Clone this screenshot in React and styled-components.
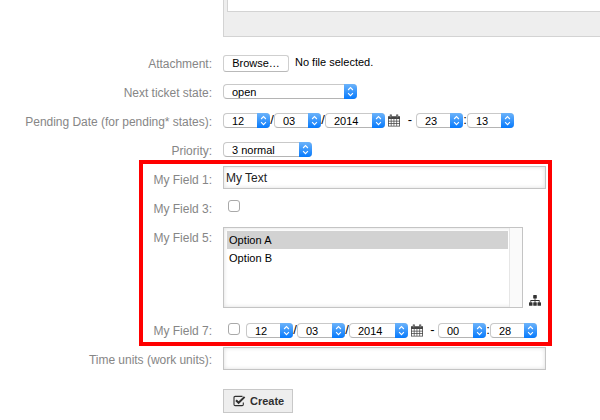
import React from 'react';
import styled, { createGlobalStyle } from 'styled-components';

const GlobalStyle = createGlobalStyle`
  * { box-sizing: border-box; }
  body {
    margin: 0;
    background: #fff;
    font-family: 'Liberation Sans', Arial, Helvetica, sans-serif;
    font-size: 11px;
    color: #000;
    overflow: hidden;
  }
`;

const Page = styled.main`
  position: relative;
  width: 600px;
  height: 420px;
  overflow: hidden;
`;

const EditorFrame = styled.div`
  height: 37px;
  margin-left: 223px;
  padding: 0 0 24px 3px;
  background: #eee;
  border-left: 1px solid #d3d3d3;
  border-bottom: 1px solid #d3d3d3;
`;

const EditorBody = styled.div`
  height: 12px;
  background: #fff;
  border-left: 1px solid #d3d3d3;
  border-bottom: 1px solid #d3d3d3;
`;

const Form = styled.form`
  display: flex;
  flex-direction: column;
  padding-top: 12px;
`;

const Row = styled.div`
  display: grid;
  grid-template-columns: 212px 1fr;
  column-gap: 11px;
  height: ${(p) => p.$height || 29}px;
`;

const Label = styled.label`
  padding-top: 1px;
  text-align: right;
  white-space: nowrap;
  line-height: 29px;
  font-size: 12px;
  letter-spacing: -0.02px;
  color: #868686;
`;

const Controls = styled.div`
  display: flex;
  align-items: flex-start;
  padding-top: ${(p) => p.$top || 0}px;
`;

const BrowseButton = styled.button`
  width: 66px;
  height: 17px;
  margin: 0 6px 0 0;
  padding: 0;
  border: 1px solid #cfcfcf;
  border-bottom-color: #b9b9b9;
  border-radius: 3px;
  background: #fff;
  font: 11px/13px 'Liberation Sans', Arial, sans-serif;
  color: #000;
`;

const FileStatus = styled.span`
  line-height: 15px;
`;

const SelectBox = styled.div`
  display: flex;
  justify-content: space-between;
  flex: none;
  width: ${(p) => p.$width}px;
  height: 15px;
  padding-left: 8px;
  border: 1px solid #c9c9c9;
  border-right: 0;
  border-bottom-color: #b4b4b4;
  border-radius: 4px;
  background: #fff;
  line-height: 14px;
`;

const Stepper = styled.span`
  display: flex;
  align-items: center;
  justify-content: center;
  width: 13px;
  height: 15px;
  margin: -1px 0;
  border-radius: 0 4px 4px 0;
  background: linear-gradient(#6cb3fa, #067afd);
`;

const Separator = styled.span`
  flex: none;
  width: ${(p) => p.$width || 4}px;
  padding-left: ${(p) => p.$inset || 0}px;
  text-align: center;
  line-height: 14px;
  font-size: 13px;
`;

const CalendarSlot = styled.span`
  display: flex;
  width: 12px;
  margin: ${(p) => p.$top}px 0 0 3px;
`;

const TextInput = styled.input`
  width: 323px;
  height: 23px;
  padding: 0 3px 0 2px;
  border: 1px solid #c4c4c4;
  border-radius: 0;
  outline: 0;
  background: #fff;
  box-shadow: inset 0 0 4px #ddd;
  font: 12px 'Liberation Sans', Arial, sans-serif;
  color: #222;
`;

const Checkbox = styled.span`
  flex: none;
  width: 12px;
  height: 12px;
  margin: 0 6px 0 5px;
  border: 1px solid #a9a9a9;
  border-radius: 3px;
  background: #fff;
`;

const ListBox = styled.div`
  display: flex;
  width: 300px;
  height: 81px;
  border: 1px solid #c4c4c4;
  background: #fff;
  box-shadow: inset 0 0 4px #ddd;
`;

const Options = styled.div`
  flex: 1;
  padding: 3px 1px 0 3px;
`;

const Option = styled.div`
  height: 18px;
  padding-left: 2px;
  line-height: 19px;
  letter-spacing: 0.05px;
  background: ${(p) => (p.$selected ? '#d2d2d2' : 'transparent')};
`;

const ScrollTrack = styled.div`
  width: 13px;
  border-left: 1px solid #e6e6e6;
  background: #fafafa;
`;

const TreeSlot = styled.span`
  display: flex;
  align-self: flex-end;
  margin: 0 0 10px 6px;
`;

const SubmitButton = styled.button`
  display: flex;
  align-items: center;
  gap: 4px;
  width: 70px;
  height: 24px;
  margin: 15px 0 0 223px;
  padding: 0 0 0 9px;
  border: 1px solid #c8c8c8;
  background: #eee;
  font: bold 11px 'Liberation Sans', Arial, sans-serif;
  color: #303030;
`;

const Highlight = styled.div`
  position: absolute;
  left: 139px;
  top: 160px;
  width: 413px;
  height: 186px;
  border: 4px solid #f00;
  pointer-events: none;
`;

function Select({ width, children }) {
  return (
    <SelectBox $width={width}>
      {children}
      <Stepper>
        <svg width="7" height="11" viewBox="0 0 7 11" fill="none" stroke="#fff" strokeWidth="1.1">
          <path d="M1.1 4 3.5 1.6 5.9 4M1.1 7.2 3.5 9.6 5.9 7.2" />
        </svg>
      </Stepper>
    </SelectBox>
  );
}

function CalendarIcon() {
  return (
    <svg width="12" height="13" viewBox="0 0 12 13">
      <path fill="#444" d="M0 2.2h1.8V.5h2v1.7h4.4V.5h2v1.7H12V12.6H0z" />
      <path
        fill="#fff"
        d="M.8 4.9h2v1.9h-2zM3.5 4.9h2.1v1.9H3.5zM6.3 4.9h2.1v1.9H6.3zM9.1 4.9h2.1v1.9H9.1zM.8 7.4h2v1.9h-2zM3.5 7.4h2.1v1.9H3.5zM6.3 7.4h2.1v1.9H6.3zM9.1 7.4h2.1v1.9H9.1zM.8 9.9h2v1.9h-2zM3.5 9.9h2.1v1.9H3.5zM6.3 9.9h2.1v1.9H6.3zM9.1 9.9h2.1v1.9H9.1z"
      />
      <path stroke="#bbb" strokeWidth=".6" d="M2.8 1.2v2.2M9.2 1.2v2.2" />
    </svg>
  );
}

function TreeIcon() {
  return (
    <svg width="12" height="11" viewBox="0 0 12 11" fill="#333">
      <rect x="4.2" y="0" width="3.6" height="3.6" rx=".6" />
      <path d="M5.6 3h.8v2.1h4.2v2.4h-.8V5.9H6.4v1.6h-.8V5.9H2.2v1.6h-.8V5.1h4.2z" />
      <rect x="0" y="7.2" width="3.5" height="3.6" rx=".6" />
      <rect x="4.25" y="7.2" width="3.5" height="3.6" rx=".6" />
      <rect x="8.5" y="7.2" width="3.5" height="3.6" rx=".6" />
    </svg>
  );
}

function CheckIcon() {
  return (
    <svg width="13" height="12" viewBox="0 0 13 12" fill="none" stroke="#303030">
      <path strokeWidth="1.1" d="M9.5 1.4H2.2Q1 1.4 1 2.6v6.8q0 1.2 1.2 1.2h6.9q1.2 0 1.2-1.2V7.6" />
      <path strokeWidth="2" d="M3 5.2 5.6 7.8 11.6 1.9" />
    </svg>
  );
}

function DateTime({ widths, values, gap, iconTop }) {
  const [month, day, year, hour, minute] = values;
  return (
    <>
      <Select width={widths[0]}>{month}</Select>
      <Separator>/</Separator>
      <Select width={widths[1]}>{day}</Select>
      <Separator>/</Separator>
      <Select width={widths[2]}>{year}</Select>
      <CalendarSlot $top={iconTop}><CalendarIcon /></CalendarSlot>
      <Separator $width={gap} $inset={4}>-</Separator>
      <Select width={widths[3]}>{hour}</Select>
      <Separator>:</Separator>
      <Select width={widths[4]}>{minute}</Select>
    </>
  );
}

export default function App() {
  return (
    <Page>
      <GlobalStyle />
      <EditorFrame><EditorBody /></EditorFrame>
      <Form onSubmit={(e) => e.preventDefault()}>
        <Row>
          <Label>Attachment:</Label>
          <Controls $top={6}>
            <BrowseButton type="button">Browse…</BrowseButton>
            <FileStatus>No file selected.</FileStatus>
          </Controls>
        </Row>
        <Row>
          <Label>Next ticket state:</Label>
          <Controls $top={6}><Select width={134}>open</Select></Controls>
        </Row>
        <Row>
          <Label>Pending Date (for pending* states):</Label>
          <Controls $top={6}>
            <DateTime widths={[47, 47, 60, 47, 47]} gap={16} iconTop={1} values={['12', '03', '2014', '23', '13']} />
          </Controls>
        </Row>
        <Row>
          <Label>Priority:</Label>
          <Controls $top={6}><Select width={89}>3 normal</Select></Controls>
        </Row>
        <Row>
          <Label>My Field 1:</Label>
          <Controls $top={1}><TextInput defaultValue="My Text" /></Controls>
        </Row>
        <Row>
          <Label>My Field 3:</Label>
          <Controls $top={6}><Checkbox /></Controls>
        </Row>
        <Row $height={93}>
          <Label>My Field 5:</Label>
          <Controls $top={4}>
            <ListBox>
              <Options>
                <Option $selected>Option A</Option>
                <Option>Option B</Option>
              </Options>
              <ScrollTrack />
            </ListBox>
            <TreeSlot><TreeIcon /></TreeSlot>
          </Controls>
        </Row>
        <Row>
          <Label>My Field 7:</Label>
          <Controls $top={7}>
            <Checkbox />
            <DateTime widths={[47, 48, 59, 48, 47]} gap={15} iconTop={1} values={['12', '03', '2014', '00', '28']} />
          </Controls>
        </Row>
        <Row>
          <Label>Time units (work units):</Label>
          <Controls $top={2}><TextInput /></Controls>
        </Row>
        <SubmitButton type="submit"><CheckIcon />Create</SubmitButton>
      </Form>
      <Highlight />
    </Page>
  );
}
